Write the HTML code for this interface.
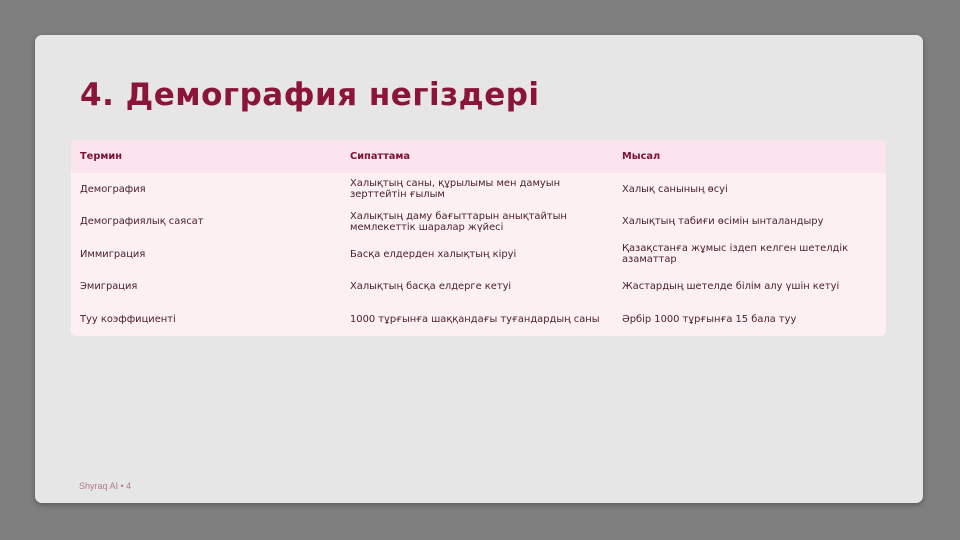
<!DOCTYPE html>
<html><head><meta charset="utf-8"><style>
body{margin:0;width:960px;height:540px;background:#7f7f7f;position:relative;overflow:hidden;font-family:"DejaVu Sans","Liberation Sans",sans-serif}
.card{position:absolute;left:35px;top:35px;width:888px;height:468px;background:#e6e6e6;border-radius:7px;box-shadow:0 2px 6px rgba(0,0,0,.3)}
h1{position:absolute;left:80px;top:77px;margin:0;font-size:31px;font-weight:bold;color:#8a1538;letter-spacing:0.5px;white-space:nowrap}
table{position:absolute;left:71px;top:140px;width:815px;border-collapse:collapse;font-size:9.9px;color:#4a2030;border-radius:5px;overflow:hidden}
th{background:#fce4ee;color:#7a1233;text-align:left;font-size:9.8px;height:33px;padding:0 0 0 9px}
td{background:#fdf0f2;height:32.5px;padding:0 2px 0 9px;line-height:11px;vertical-align:middle}
td.w{padding-right:20px}
.f{position:absolute;left:79px;top:481px;font-family:"Liberation Sans",sans-serif;font-size:9px;color:#b07a8e}
</style></head><body>
<div class="card"></div>
<h1>4. Демография негіздері</h1>
<table>
<colgroup><col style="width:270px"><col style="width:272px"><col></colgroup>
<tr><th>Термин</th><th>Сипаттама</th><th>Мысал</th></tr>
<tr><td>Демография</td><td class="w">Халықтың саны, құрылымы мен дамуын зерттейтін ғылым</td><td>Халық санының өсуі</td></tr>
<tr><td>Демографиялық саясат</td><td class="w">Халықтың даму бағыттарын анықтайтын мемлекеттік шаралар жүйесі</td><td>Халықтың табиғи өсімін ынталандыру</td></tr>
<tr><td>Иммиграция</td><td>Басқа елдерден халықтың кіруі</td><td class="w">Қазақстанға жұмыс іздеп келген шетелдік азаматтар</td></tr>
<tr><td>Эмиграция</td><td>Халықтың басқа елдерге кетуі</td><td>Жастардың шетелде білім алу үшін кетуі</td></tr>
<tr><td>Туу коэффициенті</td><td>1000 тұрғынға шаққандағы туғандардың саны</td><td>Әрбір 1000 тұрғынға 15 бала туу</td></tr>
</table>
<div class="f">Shyraq AI • 4</div>
</body></html>
